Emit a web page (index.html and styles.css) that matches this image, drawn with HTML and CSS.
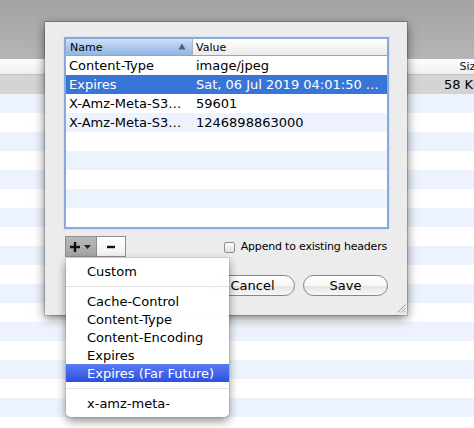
FILE: index.html
```html
<!DOCTYPE html>
<html>
<head>
<meta charset="utf-8">
<link rel="stylesheet" href="styles.css">
</head>
<body>
<div class="window">
  <div class="toolbar"></div>
  <div class="bg-header"><span class="bg-cell small">Size</span></div>
  <div class="bg-row selected-grey"><span class="bg-cell">58 KB</span></div>
  <div class="bg-row alt"></div><div class="bg-row"></div>
  <div class="bg-row alt"></div><div class="bg-row"></div>
  <div class="bg-row alt"></div><div class="bg-row"></div>
  <div class="bg-row alt"></div><div class="bg-row"></div>
  <div class="bg-row alt"></div><div class="bg-row"></div>
  <div class="bg-row alt"></div><div class="bg-row"></div>
  <div class="bg-row alt"></div><div class="bg-row"></div>
  <div class="bg-row alt"></div><div class="bg-row"></div>
  <div class="bg-row alt"></div><div class="bg-row"></div>
</div>

<div class="dialog">
  <div class="table">
    <div class="thead">
      <div class="th th-name">Name
        <svg class="sort" width="8" height="7" viewBox="0 0 8 7"><path d="M4 0.5 L7.5 6.5 L0.5 6.5 Z" fill="#4b5f7a"/></svg>
      </div>
      <div class="th th-value">Value</div>
    </div>
    <div class="tr"><div class="td name">Content-Type</div><div class="td">image/jpeg</div></div>
    <div class="tr sel"><div class="td name">Expires</div><div class="td">Sat, 06 Jul 2019 04:01:50 …</div></div>
    <div class="tr"><div class="td name">X-Amz-Meta-S3…</div><div class="td">59601</div></div>
    <div class="tr alt"><div class="td name">X-Amz-Meta-S3…</div><div class="td">1246898863000</div></div>
    <div class="tr"></div>
    <div class="tr alt"></div>
    <div class="tr"></div>
    <div class="tr alt"></div>
    <div class="tr"></div>
  </div>

  <div class="controls">
    <div class="segmented">
      <div class="seg seg-add pressed">
        <svg width="22" height="12" viewBox="0 0 22 12"><path d="M5 1 V11 M0 6 H10" stroke="#111" stroke-width="2.4"/><path d="M14 4 H21 L17.5 8 Z" fill="#222"/></svg>
      </div>
      <div class="seg seg-remove">
        <svg width="10" height="4" viewBox="0 0 10 4"><path d="M1 2 H9" stroke="#111" stroke-width="2.4"/></svg>
      </div>
    </div>
    <label class="append"><span class="checkbox"></span><span>Append to existing headers</span></label>
  </div>

  <div class="buttons">
    <button class="btn">Cancel</button>
    <button class="btn">Save</button>
  </div>

  <svg class="grip" width="10" height="10" viewBox="0 0 10 10"><path d="M9.5 1.5 L1.5 9.5 M9.5 5 L5 9.5 M9.5 8 L8 9.5" stroke="#9a9a9a" stroke-width="1"/></svg>
</div>

<div class="menu">
  <div class="mi">Custom</div>
  <div class="msep"></div>
  <div class="mi">Cache-Control</div>
  <div class="mi">Content-Type</div>
  <div class="mi">Content-Encoding</div>
  <div class="mi">Expires</div>
  <div class="mi hl">Expires (Far Future)</div>
  <div class="msep"></div>
  <div class="mi">x-amz-meta-</div>
</div>
</body>
</html>
```

FILE: styles.css
```css
html, body {
  margin: 0;
  padding: 0;
}
body {
  width: 474px;
  height: 428px;
  overflow: hidden;
  position: relative;
  background: #fff;
  font-family: "DejaVu Sans", "Liberation Sans", sans-serif;
  font-size: 13px;
  color: #000;
}

/* background window */
.window {
  display: flex;
  flex-direction: column;
  width: 474px;
}
.toolbar {
  height: 59px;
  background: linear-gradient(#a3a3a3, #b5b5b5);
}
.bg-header {
  height: 15px;
  border-bottom: 1px solid #c2c2c2;
  background: linear-gradient(#ffffff, #efefef);
  display: flex;
  justify-content: flex-end;
  align-items: center;
}
.bg-row {
  height: 19px;
  flex: none;
  display: flex;
  justify-content: flex-end;
  align-items: center;
}
.bg-row.alt { background: #edf3fe; }
.selected-grey { background: #d4d4d4; }
.bg-cell {
  margin-right: -8px;
  white-space: nowrap;
}
.bg-cell.small { font-size: 11px; color: #111; }

/* dialog sheet */
.dialog {
  position: absolute;
  left: 45px;
  top: 22px;
  width: 362px;
  height: 293px;
  box-sizing: border-box;
  padding: 15px 18px 0 19px;
  background: #ececec;
  box-shadow: 0 3px 10px rgba(0, 0, 0, 0.55), 0 0 0 1px rgba(0, 0, 0, 0.18);
  display: flex;
  flex-direction: column;
}
.table {
  height: 192px;
  box-sizing: border-box;
  border: 2px solid #87aada;
  box-shadow: 0 0 2px #b8cff0;
  background: #fff;
  overflow: hidden;
}
.thead {
  display: flex;
  height: 16px;
  border-bottom: 1px solid #9aa5b4;
  font-size: 11px;
}
.th {
  display: flex;
  align-items: center;
  box-sizing: border-box;
}
.th-name {
  width: 126px;
  padding-left: 4px;
  background: linear-gradient(#cfe0f5, #a9c6ec 55%, #93b6e3);
  position: relative;
}
.sort {
  position: absolute;
  right: 6px;
  top: 4px;
}
.th-value {
  flex: 1;
  padding-left: 3px;
  border-left: 1px solid #a9b4c2;
  background: linear-gradient(#ffffff, #ebebeb);
}
.tr {
  display: flex;
  height: 19px;
  align-items: center;
  white-space: nowrap;
}
.tr.alt { background: #edf3fe; }
.tr.sel { background: #3875d7; color: #fff; }
.td {
  padding-left: 3px;
  overflow: hidden;
}
.td.name {
  width: 127px;
  flex: none;
  box-sizing: border-box;
}

.controls {
  display: flex;
  align-items: center;
  margin-top: 7px;
  height: 21px;
}
.segmented {
  display: flex;
  margin-left: 1px;
  height: 21px;
  border: 1px solid #8e8e8e;
  box-sizing: border-box;
}
.seg {
  display: flex;
  align-items: center;
  justify-content: center;
}
.seg-add {
  width: 30px;
  background: linear-gradient(#b8b8b8, #a4a4a4);
  border-right: 1px solid #8e8e8e;
}
.seg-remove {
  width: 28px;
  background: linear-gradient(#ffffff, #f0f0f0);
}
.append {
  margin-left: auto;
  margin-right: 2px;
  display: flex;
  align-items: center;
  gap: 6px;
  font-size: 11px;
  letter-spacing: -0.2px;
}
.checkbox {
  width: 11px;
  height: 11px;
  box-sizing: border-box;
  border: 1px solid #8d8d8d;
  border-radius: 2px;
  background: linear-gradient(#ffffff, #dedede);
  margin-top: 1px;
}

.buttons {
  display: flex;
  justify-content: flex-end;
  gap: 8px;
  margin-top: 18px;
  margin-right: 1px;
}
.btn {
  width: 85px;
  height: 21px;
  border: 1px solid #858585;
  border-radius: 11px;
  background: linear-gradient(#ffffff, #f6f6f6 50%, #e4e4e4 51%, #f8f8f8);
  font-family: "DejaVu Sans", sans-serif;
  font-size: 13px;
  color: #000;
  padding: 0;
  line-height: 18px;
}
.grip {
  position: absolute;
  right: 1px;
  bottom: 2px;
}

/* popup menu */
.menu {
  position: absolute;
  left: 66px;
  top: 258px;
  width: 163px;
  box-sizing: border-box;
  padding: 4px 0 5px;
  background: rgba(255, 255, 255, 0.98);
  border-radius: 0 0 5px 5px;
  box-shadow: 0 4px 10px rgba(0, 0, 0, 0.45), 0 0 0 1px rgba(0, 0, 0, 0.08);
}
.mi {
  height: 18px;
  line-height: 20px;
  padding-left: 21px;
  white-space: nowrap;
}
.mi.hl {
  background: linear-gradient(#5b7cf2, #2c50e0);
  color: #fff;
}
.msep {
  height: 12px;
  display: flex;
  align-items: center;
}
.msep::before {
  content: "";
  display: block;
  width: 100%;
  height: 1px;
  background: #e2e2e2;
}
```
